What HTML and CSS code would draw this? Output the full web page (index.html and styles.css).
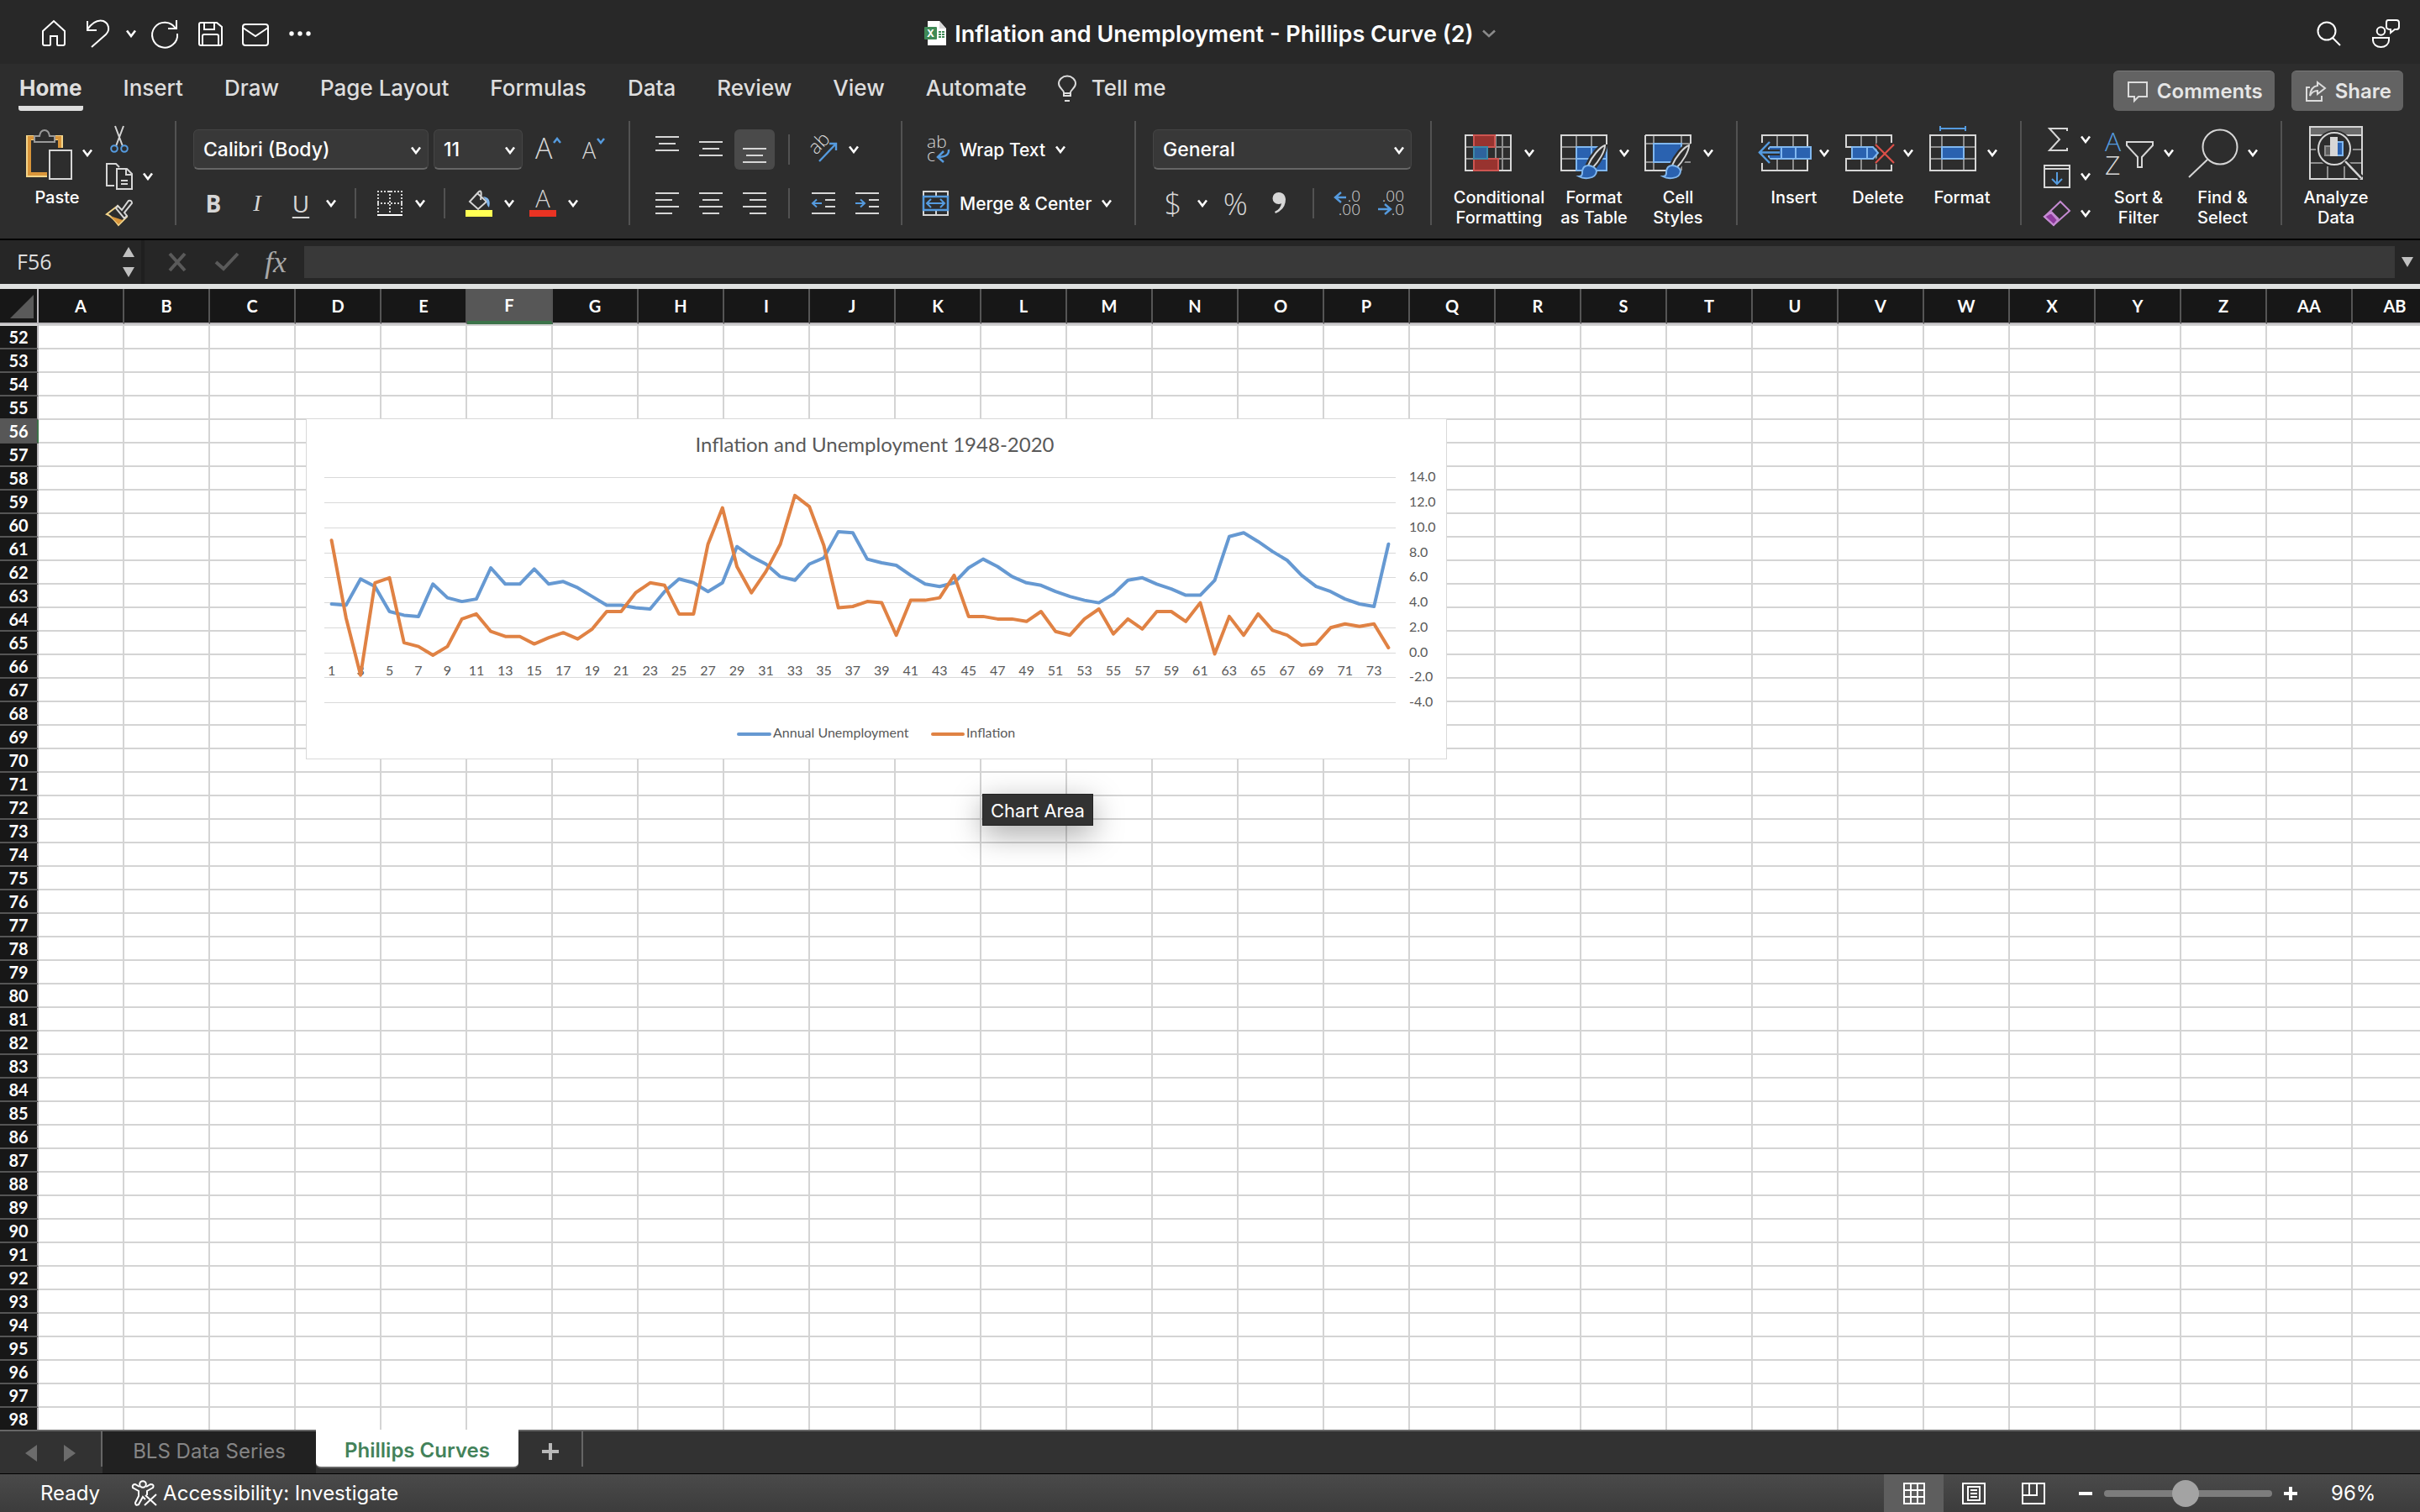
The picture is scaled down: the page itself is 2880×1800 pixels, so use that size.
FILE: index.html
```
<!DOCTYPE html>
<html lang="en">
<head>
    <meta charset="UTF-8">
    <meta name="viewport" content="width=device-width, initial-scale=1.0">
    <title>Inflation and Unemployment - Phillips Curve (2)</title>
    <link rel="stylesheet" href="styles.css">
</head>
<body>
    <!-- shared symbols -->
    <svg class="symbols" aria-hidden="true">
        <symbol id="chevron" viewBox="0 0 12 10"><path d="M1 1.5 6 8 11 1.5" fill="none" stroke="currentColor" stroke-width="2.6"/></symbol>
        <symbol id="brush" viewBox="0 0 34 42">
            <path d="M32 1C26 2 16 14 12 24L18 28C25 20 32 8 32 1Z" fill="#2d2d2d" stroke="#2d2d2d" stroke-width="6"/>
            <path d="M32 1C26 3 16 15 12 25L17 28C25 20 32 8 32 1Z" fill="#2d2d2d" stroke="#d6d6d6" stroke-width="2"/>
            <path d="M12 25C6 25 5 30 5 34C5 37 3 38 1 38C6 41 21 42 22 32C22 28 16 25 12 25Z" fill="#2a62b0" stroke="#80b7ef" stroke-width="2"/>
        </symbol>
    </svg>

    <header class="titlebar">
        <div class="quick-access">
            <button aria-label="Home"><svg width="32" height="34" viewBox="0 0 32 34"><path d="M3 14 16 2 29 14V29Q29 31 27 31H21Q20 31 20 30V20H12V30Q12 31 11 31H5Q3 31 3 29Z"/></svg></button>
            <button aria-label="Undo"><svg width="32" height="34" viewBox="0 0 32 34"><path d="M3 2V13H14M3 12C8 5 15 0 22 2C29 5 30 13 25 18L8 33"/></svg></button>
            <button aria-label="Undo history" class="narrow"><svg class="chevron"><use href="#chevron"/></svg></button>
            <button aria-label="Redo"><svg width="34" height="34" viewBox="0 0 34 34"><path d="M31 1V11H21M30 11A15 15 0 1 0 32 17"/></svg></button>
            <button aria-label="Save"><svg width="32" height="34" viewBox="0 0 32 34"><path d="M5 4H24L30 9V29Q30 31 28 31H5Q3 31 3 29V6Q3 4 5 4ZM9 4V12H21V4M7 31V20Q7 18 9 18H24Q26 18 26 20V31"/></svg></button>
            <button aria-label="Mail"><svg width="34" height="34" viewBox="0 0 34 34"><rect x="2" y="6" width="30" height="25" rx="3"/><path d="M2 10 17 20 32 10"/></svg></button>
            <button aria-label="More"><svg width="32" height="34" viewBox="0 0 32 34"><g fill="#fff" stroke="none"><circle cx="5" cy="17" r="2.7"/><circle cx="15" cy="17" r="2.7"/><circle cx="25" cy="17" r="2.7"/></g></svg></button>
        </div>
        <h1 class="doc-title">
            <svg width="26" height="30" viewBox="0 0 26 30"><path d="M4 0H18L26 9V29H4Z" fill="#fff"/><path d="M18 0V9H26" fill="#d8d8d8"/><path d="M17 12h3v2h-3zM21 12h3v2h-3zM17 15h3v2h-3zM21 15h3v2h-3zM17 18h3v2h-3zM21 18h3v2h-3z" fill="#3f8a56"/><rect y="7" width="15" height="15" rx="1" fill="#3f8a56"/><text x="7.5" y="19" text-anchor="middle" font-size="12" font-weight="700" fill="#fff">X</text></svg>
            Inflation and Unemployment - Phillips Curve (2)
            <svg class="title-chevron" width="16" height="10" viewBox="0 0 16 10"><path d="M1 1.5 8 8 15 1.5" fill="none" stroke="#8a8a8a" stroke-width="2.6"/></svg>
        </h1>
        <div class="title-actions">
            <button aria-label="Search"><svg width="32" height="34" viewBox="0 0 32 34"><circle cx="13" cy="14" r="10.500"/><path d="M20 22 29 31"/></svg></button>
            <button aria-label="Presence"><svg width="34" height="34" viewBox="0 0 34 34"><circle cx="11.500" cy="14" r="4.800"/><path d="M2 22H21V25A9.500 8 0 0 1 2 25ZM20 1H30Q33 1 33 4V9Q33 12 30 12H28L23 16V12Q18 12 18 9V4Q18 1 20 1"/></svg></button>
        </div>
    </header>

    <nav class="tabs">
        <a href="#home" class="current">Home</a>
        <a href="#insert">Insert</a>
        <a href="#draw">Draw</a>
        <a href="#layout">Page Layout</a>
        <a href="#formulas">Formulas</a>
        <a href="#data">Data</a>
        <a href="#review">Review</a>
        <a href="#view">View</a>
        <a href="#automate">Automate</a>
        <a href="#tell" class="tell-me"><svg width="22" height="32" viewBox="0 0 22 32" fill="none" stroke="#dcdcdc" stroke-width="2"><path d="M7 24V20C7 17 1 15 1 9.500A10 9 0 0 1 21 9.500C21 15 15 17 15 20V24ZM7 21H15M8 30H14"/></svg>Tell me</a>
        <div class="tab-buttons">
            <button><svg width="26" height="26" viewBox="0 0 26 26"><path d="M2 2H24V19H14L9 24V19H2Z"/></svg>Comments</button>
            <button><svg width="26" height="26" viewBox="0 0 26 26"><path d="M6 8H2V24H20V18M15 2 24 9 15 16V12Q9 12 6 18Q7 7 15 6Z"/></svg>Share</button>
        </div>
    </nav>

    <div class="ribbon">
        <section class="group clipboard">
            <button class="big">
                <span class="face">
                    <svg width="64" height="64" viewBox="0 0 64 64" fill="none"><path d="M16 14H8V58H30M40 14H46V26" stroke="#f3d58a" stroke-width="6"/><path d="M17 14H9V57H30M40 14H45V26" stroke="#d9953a" stroke-width="4"/><path d="M15 19V12H21Q22 5 27 5Q32 5 33 12H39V19Z" fill="#2d2d2d" stroke="#9a9a9a" stroke-width="2"/><path d="M33 29H59V63H33Z" fill="#2d2d2d" stroke="#d6d6d6" stroke-width="2"/></svg>
                    <svg class="chevron"><use href="#chevron"/></svg>
                </span>
                Paste
            </button>
            <div class="stack">
                <button aria-label="Cut"><svg width="32" height="32" viewBox="0 0 32 32" fill="none" stroke-width="2"><path d="M11 0 20 24M21 0 12 24" stroke="#d6d6d6"/><circle cx="10" cy="27" r="3.800" stroke="#559bdf"/><circle cx="22" cy="27" r="3.800" stroke="#559bdf"/></svg></button>
                <button aria-label="Copy"><svg width="32" height="32" viewBox="0 0 32 32" fill="none" stroke="#d6d6d6" stroke-width="2"><path d="M10 27H1V1H12L16 5M13 7H25L31 13V31H13ZM24 7V14H31"/><path d="M18 21H26M18 25H26"/></svg><svg class="chevron"><use href="#chevron"/></svg></button>
                <button aria-label="Format Painter"><svg width="32" height="32" viewBox="0 0 32 32" fill="none" stroke-width="2"><path d="M14 7 25 20 15 30Q8 20 1 17Z" stroke="#f3d58a"/><path d="M5 19 20 24 15 29Z" fill="#d9953a"/><path d="M14 7 19 12 27 1Q31 0 31 4L22 15 25 19 22 22 12 10Z" fill="#2d2d2d" stroke="#d6d6d6"/></svg></button>
            </div>
        </section>

        <section class="group font rows">
            <div class="row">
                <label class="picker font-name"><select aria-label="Font"><option>Calibri (Body)</option></select><svg class="chevron"><use href="#chevron"/></svg></label>
                <label class="picker font-size"><select aria-label="Font size"><option>11</option></select><svg class="chevron"><use href="#chevron"/></svg></label>
                <button class="tool" aria-label="Increase font size"><svg width="32" height="32" viewBox="0 0 32 32"><text x="1" y="27" font-size="34" class="thin">A</text><path d="M23 8 27 3 31 8" fill="none" stroke="#559bdf" stroke-width="2.500"/></svg></button>
                <button class="tool" aria-label="Decrease font size"><svg width="32" height="32" viewBox="0 0 32 32"><text x="3" y="27" font-size="27" class="thin">A</text><path d="M21 3 25 8 29 3" fill="none" stroke="#559bdf" stroke-width="2.500"/></svg></button>
            </div>
            <div class="row">
                <button class="tool glyph bold">B</button>
                <button class="tool spaced glyph italic">I</button>
                <button class="tool spaced glyph underline">U</button>
                <button class="drop" aria-label="Underline options"><svg class="chevron"><use href="#chevron"/></svg></button>
                <i class="divider"></i>
                <button class="tool" aria-label="Borders"><svg width="32" height="32" viewBox="0 0 32 32" fill="none" stroke="#d6d6d6" stroke-width="2"><path d="M1 2H31M1 16H31M2 1V28M16 1V28M30 1V28" stroke-dasharray="2 2"/><path d="M1 30H31" stroke="#fff"/></svg></button>
                <button class="drop" aria-label="Border options"><svg class="chevron"><use href="#chevron"/></svg></button>
                <i class="divider"></i>
                <button class="tool" aria-label="Fill colour"><svg width="32" height="32" viewBox="0 0 32 32" fill="none"><path d="M14 4 25 14 15 23 5 14 16 2Q20 -1 18 12" stroke="#d6d6d6" stroke-width="2"/><path d="M21 8Q31 9 28 21Q25 18 25 13Z" fill="#80b7ef"/><path d="M0 24H32V32H0Z" fill="#ffff54"/></svg></button>
                <button class="drop" aria-label="Fill options"><svg class="chevron"><use href="#chevron"/></svg></button>
                <button class="tool spaced" aria-label="Font colour"><svg width="32" height="32" viewBox="0 0 32 32"><text x="16" y="21" text-anchor="middle" font-size="29" class="thin">A</text><path d="M0 24H32V32H0Z" fill="#e93323"/></svg></button>
                <button class="drop" aria-label="Font colour options"><svg class="chevron"><use href="#chevron"/></svg></button>
            </div>
        </section>

        <section class="group alignment rows">
            <div class="row">
                <button class="tool" aria-label="Top"><svg class="lines" width="28" height="32" viewBox="0 0 28 32"><path d="M0 1H28M4 9H24M0 17H28"/></svg></button>
                <button class="tool spaced" aria-label="Middle"><svg class="lines" width="28" height="32" viewBox="0 0 28 32"><path d="M0 7H28M4 15H24M0 23H28"/></svg></button>
                <button class="tool spaced pressed" aria-label="Bottom"><svg class="lines" width="28" height="32" viewBox="0 0 28 32"><path d="M0 15H28M4 23H24M0 31H28"/></svg></button>
                <i class="divider"></i>
                <button class="tool" aria-label="Orientation"><svg width="34" height="32" viewBox="0 0 34 32"><text transform="translate(8 23) rotate(-45)" font-size="23" class="thin">ab</text><path d="M12 30 32 9M24 9H32V17" fill="none" stroke="#559bdf" stroke-width="2.400"/></svg></button>
                <button class="drop" aria-label="Orientation options"><svg class="chevron"><use href="#chevron"/></svg></button>
            </div>
            <div class="row">
                <button class="tool" aria-label="Left"><svg class="lines" width="28" height="28" viewBox="0 0 28 28"><path d="M0 2H28M0 10H20M0 18H28M0 26H20"/></svg></button>
                <button class="tool spaced" aria-label="Center"><svg class="lines" width="28" height="28" viewBox="0 0 28 28"><path d="M0 2H28M4 10H24M0 18H28M4 26H24"/></svg></button>
                <button class="tool spaced" aria-label="Right"><svg class="lines" width="28" height="28" viewBox="0 0 28 28"><path d="M0 2H28M8 10H28M0 18H28M8 26H28"/></svg></button>
                <i class="divider"></i>
                <button class="tool" aria-label="Decrease indent"><svg class="lines" width="28" height="28" viewBox="0 0 28 28"><path d="M0 2H28M16 10H28M16 18H28M0 26H28"/><path d="M12 14H1M6 9.500 1 14 6 18.500" stroke="#559bdf"/></svg></button>
                <button class="tool spaced" aria-label="Increase indent"><svg class="lines" width="28" height="28" viewBox="0 0 28 28"><path d="M0 2H28M16 10H28M16 18H28M0 26H28"/><path d="M0 14H11M6 9.500 11 14 6 18.500" stroke="#559bdf"/></svg></button>
            </div>
        </section>

        <section class="group wrap rows">
            <button class="wide"><svg width="32" height="34" viewBox="0 0 32 34"><text x="5" y="15" font-size="21" class="thin">ab</text><text x="5" y="31" font-size="21" class="thin">c</text><path d="M31 17Q32 26 18 26M25 19 18 26 25 32" fill="none" stroke="#559bdf" stroke-width="2.500"/></svg>Wrap Text<svg class="chevron"><use href="#chevron"/></svg></button>
            <button class="wide"><svg width="32" height="34" viewBox="0 0 32 34" fill="none" stroke-width="2"><path d="M1 3H30V31H1ZM16 3V31" stroke="#d6d6d6"/><path d="M1 9H30V25H1Z" fill="#2d2d2d" stroke="#559bdf" stroke-width="2.500"/><path d="M6 17H25M10 12 5 17 10 22M21 12 26 17 21 22" stroke="#559bdf"/></svg>Merge &amp; Center<svg class="chevron"><use href="#chevron"/></svg></button>
        </section>

        <section class="group number rows">
            <label class="picker"><select aria-label="Number format"><option>General</option></select><svg class="chevron"><use href="#chevron"/></svg></label>
            <div class="row">
                <button class="tool glyph symbol">$</button>
                <button class="drop" aria-label="Currency options"><svg class="chevron"><use href="#chevron"/></svg></button>
                <button class="tool spaced glyph symbol">%</button>
                <button class="tool spaced" aria-label="Comma style"><svg width="16" height="28" viewBox="0 0 16 28"><path d="M7.500 1A7 7 0 0 0 7.500 15Q10 15 11 14Q10 21 3 24L4 26Q16 21 16 9Q15 1 7.500 1Z" fill="#d6d6d6"/></svg></button>
                <i class="divider"></i>
                <button class="tool" aria-label="Increase decimal"><svg width="32" height="32" viewBox="0 0 32 32"><text x="31" y="14" text-anchor="end" font-size="19" class="thin">.0</text><text x="31" y="30" text-anchor="end" font-size="19" class="thin">.00</text><path d="M14 9H1M8 3 1 9 8 15" fill="none" stroke="#559bdf" stroke-width="2.400"/></svg></button>
                <button class="tool spaced" aria-label="Decrease decimal"><svg width="32" height="32" viewBox="0 0 32 32"><text x="31" y="14" text-anchor="end" font-size="19" class="thin">.00</text><text x="31" y="30" text-anchor="end" font-size="19" class="thin">.0</text><path d="M0 23H14M8 17 15 23 8 29" fill="none" stroke="#559bdf" stroke-width="2.400"/></svg></button>
            </div>
        </section>

        <section class="group styles">
            <button class="big first">
                <span class="face"><svg width="64" height="64" viewBox="0 0 64 64" fill="none" stroke-width="2"><path d="M2 25H56M2 39H56M12 11V53M38 11V53M46 11V53" stroke="#8e8e8e"/><path d="M2 11H56V53H2Z" stroke="#d6d6d6"/><path d="M12 11H37V25H12ZM12 39H41V53H12Z" fill="#98332f" stroke="#cd5551"/><path d="M12 25H28V39H12Z" fill="#2e639d" stroke="#3e88a8"/></svg><svg class="chevron"><use href="#chevron"/></svg></span>
                Conditional<br>Formatting
            </button>
            <button class="big">
                <span class="face"><svg width="64" height="64" viewBox="0 0 64 64" fill="none" stroke-width="2"><path d="M3 25H57M3 39H57M21 11V53M39 11V53" stroke="#8e8e8e"/><path d="M3 11H57V53H3Z" stroke="#d6d6d6"/><path d="M21 25H57V53H21ZM21 39H57M39 25V53" fill="#2a62b0" stroke="#80b7ef"/><use href="#brush" x="17" y="22" width="46" height="42"/></svg><svg class="chevron"><use href="#chevron"/></svg></span>
                Format<br>as Table
            </button>
            <button class="big">
                <span class="face"><svg width="64" height="64" viewBox="0 0 64 64" fill="none" stroke-width="2"><path d="M3 21H57M3 43H57M13 11V53M46 11V53" stroke="#8e8e8e"/><path d="M3 11H57V21M30 53H3V11" stroke="#d6d6d6"/><path d="M13 21H46V43H13Z" fill="#2a62b0" stroke="#80b7ef"/><use href="#brush" x="17" y="22" width="46" height="42"/></svg><svg class="chevron"><use href="#chevron"/></svg></span>
                Cell<br>Styles
            </button>
        </section>

        <section class="group cells">
            <button class="big">
                <span class="face"><svg width="64" height="64" viewBox="0 0 64 64" fill="none" stroke-width="2"><path d="M22 11V53M41 11V53" stroke="#8e8e8e"/><path d="M4 20V11H58V53H4V44" stroke="#d6d6d6"/><path d="M12 25H62V39H12ZM27 25V39M44 25V39" fill="#2a62b0" stroke="#80b7ef"/><path d="M0 31.500H25M13 19 1 31.500 13 44" stroke="#2d2d2d" stroke-width="7"/><path d="M0 31.500H25M13 19 1 31.500 13 44" stroke="#559bdf" stroke-width="2.500"/></svg><svg class="chevron"><use href="#chevron"/></svg></span>
                Insert
            </button>
            <button class="big">
                <span class="face"><svg width="64" height="64" viewBox="0 0 64 64" fill="none" stroke-width="2"><path d="M22 11V53M40 11V53" stroke="#8e8e8e"/><path d="M12 25H4V11H58V20M58 46V53H4V39H12" stroke="#d6d6d6"/><path d="M11 25H36L42 32 36 39H11ZM29 25V39" fill="#2a62b0" stroke="#80b7ef"/><path d="M39 22 61 44M61 22 39 44" stroke="#2d2d2d" stroke-width="6"/><path d="M39 22 61 44M61 22 39 44" stroke="#dd4f48" stroke-width="2.200"/></svg><svg class="chevron"><use href="#chevron"/></svg></span>
                Delete
            </button>
            <button class="big">
                <span class="face"><svg width="64" height="64" viewBox="0 0 64 64" fill="none" stroke-width="2"><path d="M4 25H58M4 39H58M18 11V53M44 11V53" stroke="#8e8e8e"/><path d="M4 11H58V53H4Z" stroke="#d6d6d6"/><path d="M18 25H44V39H18Z" fill="#2a62b0" stroke="#80b7ef"/><path d="M16 3H46M16 0V6M46 0V6" stroke="#559bdf"/></svg><svg class="chevron"><use href="#chevron"/></svg></span>
                Format
            </button>
        </section>

        <section class="group editing">
            <div class="stack">
                <button aria-label="AutoSum"><svg width="32" height="32" viewBox="0 0 32 32" fill="none" stroke="#d6d6d6" stroke-width="2"><path d="M28 6V3H7L19 16 7 29H28V26"/></svg><svg class="chevron"><use href="#chevron"/></svg></button>
                <button aria-label="Fill"><svg width="32" height="32" viewBox="0 0 32 32" fill="none" stroke="#d6d6d6" stroke-width="2"><path d="M1 3H31V29H1ZM1 7H31"/><path d="M16 11V25M10 19 16 25 22 19" stroke="#559bdf"/></svg><svg class="chevron"><use href="#chevron"/></svg></button>
                <button aria-label="Clear"><svg width="32" height="32" viewBox="0 0 32 32" fill="none" stroke="#c58ad2" stroke-width="2"><path d="M9 15 17 24 12 30 1 20Z" fill="#8e3a9d"/><path d="M20 2 31 13 12 30 1 20ZM9 14 18 23"/></svg><svg class="chevron"><use href="#chevron"/></svg></button>
            </div>
            <button class="big">
                <span class="face"><svg width="64" height="64" viewBox="0 0 64 64" fill="none"><text x="2" y="30" font-size="32" class="thin blue">A</text><text x="2" y="58" font-size="32" class="thin">Z</text><path d="M28 19H59V23L46 37V49H41V37L28 23Z" stroke="#d6d6d6" stroke-width="2"/></svg><svg class="chevron"><use href="#chevron"/></svg></span>
                Sort &amp;<br>Filter
            </button>
            <button class="big">
                <span class="face"><svg width="64" height="64" viewBox="0 0 64 64" fill="none" stroke="#d6d6d6" stroke-width="2"><circle cx="39" cy="25" r="20.500"/><path d="M24 40 2 61"/></svg><svg class="chevron"><use href="#chevron"/></svg></span>
                Find &amp;<br>Select
            </button>
        </section>

        <section class="group analysis">
            <button class="big">
                <span class="face"><svg width="64" height="64" viewBox="0 0 64 64" fill="none" stroke-width="2"><path d="M1 1H63V11H1Z" fill="#6b6b6b"/><path d="M1 28H63M1 44H63M22 48V63M42 48V63" stroke="#8e8e8e"/><path d="M1 63V1H63V63ZM1 11H63" stroke="#d6d6d6"/><circle cx="30" cy="27" r="22" fill="#2d2d2d"/><circle cx="30" cy="27" r="19" stroke="#d6d6d6"/><path d="M42 42 62 62" stroke="#2d2d2d" stroke-width="7"/><path d="M43 42 62 62" stroke="#d6d6d6" stroke-width="2.500"/><path d="M19 24H26V35H19Z" fill="#5c5c5c" stroke="#8e8e8e"/><path d="M33 19H40V35H33Z" fill="#2a62b0" stroke="#80b7ef"/><path d="M25 13H34V36H25Z" fill="#d6d6d6"/></svg></span>
                Analyze<br>Data
            </button>
        </section>
    </div>

    <div class="formula-bar">
        <div class="name-box">
            <input type="text" value="F56" aria-label="Name box">
            <svg width="14" height="36" viewBox="0 0 14 36"><path d="M0 12 7 0 14 12ZM0 24H14L7 36Z" fill="#c0c0c0"/></svg>
        </div>
        <div class="formula-buttons">
            <button aria-label="Cancel"><svg width="28" height="22" viewBox="0 0 28 22"><path d="M5 1 23 21M23 1 5 21" stroke="#5a5a5a" stroke-width="4"/></svg></button>
            <button aria-label="Enter"><svg width="28" height="22" viewBox="0 0 28 22"><path d="M1 11 10 19 27 1" fill="none" stroke="#5a5a5a" stroke-width="4"/></svg></button>
            <button class="fx">fx</button>
        </div>
        <input type="text" class="formula" aria-label="Formula">
        <button class="expand" aria-label="Expand"><svg width="14" height="12" viewBox="0 0 14 12"><path d="M0 0H14L7 12Z" fill="#c0c0c0"/></svg></button>
    </div>

    <main class="sheet">
        <table class="grid">
            <thead><tr id="columns"><th class="corner"><svg width="28" height="28" viewBox="0 0 28 28"><path d="M28 0V28H0Z" fill="#5a5a5a"/></svg></th></tr></thead>
            <tbody id="rows"></tbody>
        </table>
        <figure class="chart">
            <svg id="chart" width="1356" height="404" viewBox="1 1 1356 404" role="img" aria-label="Inflation and Unemployment 1948-2020"></svg>
        </figure>
        <div class="tooltip">Chart Area</div>
    </main>

    <div class="sheet-tabs">
        <div class="sheet-nav">
            <button aria-label="Previous sheet"><svg width="14" height="20" viewBox="0 0 14 20"><path d="M14 0V20L0 10Z" fill="#6c6c6c"/></svg></button>
            <button aria-label="Next sheet"><svg width="14" height="20" viewBox="0 0 14 20"><path d="M0 0V20L14 10Z" fill="#6c6c6c"/></svg></button>
        </div>
        <button class="sheet-tab">BLS Data Series</button>
        <button class="sheet-tab active">Phillips Curves</button>
        <button class="add-sheet" aria-label="Add sheet"><svg width="20" height="20" viewBox="0 0 20 20"><path d="M10 0V20M0 10H20" stroke="#b9b9b9" stroke-width="4"/></svg></button>
    </div>

    <footer class="status">
        <span>Ready</span>
        <button class="access"><svg width="30" height="32" viewBox="0 0 30 32" fill="none" stroke="#fff" stroke-width="2"><circle cx="13" cy="5" r="3.800"/><path d="M9 8 4 5Q0 5 1 9L8 13V19L4 27Q4 31 8 29L13 20 16 23M17 8 22 5Q27 5 25 9L18 13V18M16 18 29 30M29 17 15 30"/></svg>Accessibility: Investigate</button>
        <div class="views">
            <button class="on" aria-label="Normal view"><svg width="28" height="28" viewBox="0 0 28 28"><path d="M2 2H26V26H2ZM10 2V26M18 2V26M2 10H26M2 18H26"/></svg></button>
            <button aria-label="Page layout view"><svg width="28" height="28" viewBox="0 0 28 28"><path d="M1 2H27V26H1ZM7 6H21V22H7ZM10 10H18M10 14H18M10 18H18"/></svg></button>
            <button aria-label="Page break view"><svg width="28" height="28" viewBox="0 0 28 28"><path d="M1 2H27V26H1ZM1 16H18V2M9 2V16"/></svg></button>
        </div>
        <div class="zoom">
            <button aria-label="Zoom out"><svg width="16" height="16" viewBox="0 0 16 16"><path d="M0 8H16" stroke="#fff" stroke-width="4"/></svg></button>
            <input type="range" min="0" max="100" value="48" aria-label="Zoom">
            <button aria-label="Zoom in"><svg width="16" height="16" viewBox="0 0 16 16"><path d="M8 0V16M0 8H16" stroke="#fff" stroke-width="4"/></svg></button>
            <span class="percent">96%</span>
        </div>
    </footer>
    <script src="script.js"></script>
</body>
</html>
```
FILE: styles.css
```
* {
    box-sizing: border-box;
}
body {
    margin: 0;
    height: 100vh;
    display: flex;
    flex-direction: column;
    overflow: hidden;
    background: #282828;
    color: #fff;
    font-family: Inter, "Liberation Sans", sans-serif;
    font-size: 20px;
}
button {
    display: flex;
    align-items: center;
    justify-content: center;
    padding: 0;
    border: none;
    background: none;
    color: inherit;
    font: inherit;
}
svg {
    display: block;
    flex: none;
    overflow: visible;
}
.symbols {
    position: absolute;
    width: 0;
    height: 0;
}
.chevron {
    width: 12px;
    height: 10px;
}

/* title bar */
.titlebar {
    height: 76px;
    flex: none;
    display: grid;
    grid-template-columns: 1fr auto 1fr;
    align-items: center;
    padding: 4px 24px 0;
}
.quick-access, .title-actions {
    display: flex;
    align-items: center;
    gap: 21px;
}
.quick-access {
    padding-left: 24px;
}
.quick-access svg, .title-actions svg {
    fill: none;
    stroke: #fff;
    stroke-width: 2;
}
.quick-access .narrow {
    margin: 0 -4px;
}
.title-actions {
    justify-content: flex-end;
    gap: 34px;
}
.doc-title {
    display: flex;
    align-items: center;
    gap: 10px;
    margin: 0;
    font-size: 27px;
    font-weight: 600;
}

/* ribbon tabs */
.tabs {
    height: 58px;
    flex: none;
    display: flex;
    align-items: flex-start;
    gap: 47px;
    padding: 8px 20px 0 22px;
    background: #2d2d2d;
    font-size: 26px;
    font-weight: 500;
}
.tabs a {
    height: 48px;
    padding: 0 1px;
    line-height: 42px;
    color: #dedede;
    text-decoration: none;
}
.tabs .current {
    font-weight: 700;
    border-bottom: 6px solid #dedede;
    border-radius: 3px;
}
.tabs .tell-me {
    display: flex;
    gap: 18px;
    margin-left: -12px;
}
.tell-me svg {
    margin-top: 6px;
}
.tab-buttons {
    display: flex;
    gap: 20px;
    margin-left: auto;
}
.tab-buttons button {
    height: 48px;
    gap: 10px;
    padding: 0 14px 0 16px;
    border-radius: 6px;
    background: #636363;
    border-top: 1px solid #787878;
    color: #e6e6e6;
    font-size: 24px;
    font-weight: 600;
}
.tab-buttons svg {
    fill: none;
    stroke: #dcdcdc;
    stroke-width: 2;
}

/* ribbon */
.ribbon {
    height: 152px;
    flex: none;
    display: flex;
    padding-top: 10px;
    background: #2d2d2d;
    border-bottom: 2px solid #000;
}
.group {
    height: 124px;
    flex: none;
    display: flex;
    border-right: 2px solid #525252;
}
.rows {
    flex-direction: column;
    gap: 16px;
    padding-top: 10px;
}
.row {
    display: flex;
    align-items: center;
}
.clipboard { width: 210px; padding-left: 18px; }
.font { width: 540px; padding-left: 20px; }
.alignment { width: 324px; padding-left: 20px; }
.wrap { width: 278px; padding-left: 24px; }
.number { width: 352px; padding: 10px 22px 0 20px; }
.styles { width: 364px; padding-left: 17px; }
.cells { width: 338px; padding-left: 17px; }
.editing { width: 310px; padding-left: 26px; }
.analysis { border: none; padding-left: 14px; }

.big {
    width: 100px;
    flex: none;
    flex-direction: column;
    justify-content: flex-start;
    padding-top: 6px;
    line-height: 24px;
    font-weight: 500;
}
.big.first {
    width: 126px;
}
.face {
    display: flex;
    align-items: center;
    gap: 8px;
    margin-bottom: 9px;
}
.stack {
    display: flex;
    flex-direction: column;
    gap: 12px;
    padding-top: 6px;
}
.stack button {
    height: 32px;
    justify-content: flex-start;
    gap: 12px;
}
.clipboard .stack {
    margin-left: 8px;
}
.editing .stack {
    margin-right: 7px;
}
.tool {
    width: 48px;
    height: 48px;
    flex: none;
}
.spaced {
    margin-left: 4px;
}
.drop {
    width: 24px;
    height: 48px;
}
.pressed {
    border-radius: 6px;
    background: #4a4a4a;
}
.divider {
    width: 2px;
    height: 36px;
    margin: 0 16px;
    background: #525252;
}
.lines {
    fill: none;
    stroke: #d6d6d6;
    stroke-width: 2;
}
.thin {
    fill: #d6d6d6;
    font-family: "Open Sans", sans-serif;
    font-weight: 300;
}
.blue {
    fill: #559bdf;
}
.glyph {
    color: #d6d6d6;
    font-family: "Open Sans", sans-serif;
    font-size: 28px;
}
.bold { font-weight: 700; }
.italic { font-family: "Liberation Serif", serif; font-style: italic; }
.underline { text-decoration: underline; text-decoration-thickness: 2px; text-underline-offset: 5px; }
.symbol { font-size: 36px; font-weight: 300; }
.picker {
    position: relative;
    display: block;
    height: 48px;
}
.picker select {
    width: 100%;
    height: 48px;
    padding: 0 11px;
    appearance: none;
    border: 1px solid #454545;
    border-bottom: 2px solid #666;
    border-radius: 6px;
    background: #383838;
    color: #fff;
    font-family: inherit;
    font-size: 23px;
    font-weight: 500;
}
.picker .chevron {
    position: absolute;
    right: 9px;
    top: 20px;
}
.font-name { width: 280px; }
.font-size { width: 106px; margin: 0 6px; }
.font .font-size + .tool { margin-right: 6px; }
.wide {
    height: 48px;
    gap: 12px;
    justify-content: flex-start;
    font-size: 21px;
    font-weight: 500;
}

/* formula bar */
.formula-bar {
    height: 52px;
    flex: none;
    display: flex;
    align-items: center;
    background: #262626;
}
.name-box {
    width: 172px;
    height: 52px;
    display: flex;
    align-items: center;
    padding: 0 8px 0 18px;
    border-right: 4px solid #1f1f1f;
}
.name-box input {
    flex: 1;
    min-width: 0;
    padding: 0 0 2px 2px;
    border: none;
    background: none;
    color: #dedede;
    font-family: "Open Sans", sans-serif;
    font-size: 25px;
}
.formula-buttons {
    display: flex;
    align-items: center;
    gap: 31px;
    width: 190px;
    padding-left: 25px;
}
.fx {
    color: #a8a8a8;
    font-family: "Liberation Serif", serif;
    font-style: italic;
    font-size: 36px;
    line-height: 40px;
}
.formula {
    flex: 1;
    height: 38px;
    border: none;
    background: #393939;
    color: #fff;
    font-size: 24px;
}
.expand {
    width: 30px;
}

/* sheet */
.sheet {
    position: relative;
    flex: 1;
    min-height: 0;
    overflow: hidden;
    border-top: 6px solid #dfe1e0;
    background: #fff;
}
.grid {
    width: max-content;
    border-spacing: 0;
    font-family: Lato, sans-serif;
    font-size: 20px;
    font-weight: 700;
    line-height: 26px;
}
.grid th, .grid td {
    width: 102px;
    height: 28px;
    padding: 0;
    border-right: 2px solid #d4d4d4;
    border-bottom: 2px solid #d4d4d4;
}
.grid thead th {
    height: 42px;
    background: #171717;
    border-right-color: #555;
    border-bottom-color: #bcb9bd;
}
.grid tbody th, .grid thead .corner {
    width: 46px;
    background: #171717;
    border-right-color: #bcb9bd;
}
.grid tbody th {
    border-bottom-color: #555;
}
.grid tbody tr:first-child > * {
    height: 30px;
    border-top: 2px solid #d4d4d4;
}
.grid .corner svg {
    margin: 2px 0 0 12px;
}
.grid thead .selected {
    background: #575757;
    border-bottom: 4px solid #3c734a;
}
.grid tbody .selected {
    background: #575757;
    border-right-color: #3c734a;
}
.active-cell {
    position: relative;
}
.active-cell::before {
    content: "";
    position: absolute;
    left: -4px;
    right: -4px;
    top: -2px;
    height: 2px;
    background: #3c734a;
}
.chart {
    position: absolute;
    left: 364px;
    top: 154px;
    margin: 0;
    border: 1px solid #d9d9d9;
    background: #fff;
    font-family: Lato, sans-serif;
}
.chart text {
    fill: #595959;
    font-size: 16px;
}
.chart .chart-title {
    font-size: 24px;
}
.gridline {
    stroke: #d9d9d9;
}
.series {
    fill: none;
    stroke-width: 4;
    stroke-linejoin: round;
    stroke-linecap: round;
}
.unemployment { stroke: #6699d2; }
.inflation { stroke: #e08244; }
.tooltip {
    position: absolute;
    left: 1169px;
    top: 601px;
    padding: 2px 9px 0;
    border: 1px solid #222;
    background: #323232;
    font-size: 22px;
    line-height: 34px;
    box-shadow: 0 10px 36px rgba(0,0,0,0.35);
}

/* sheet tabs */
.sheet-tabs {
    height: 52px;
    flex: none;
    display: flex;
    align-items: flex-start;
    background: #323232;
    font-size: 24px;
}
.sheet-nav {
    width: 122px;
    height: 44px;
    display: flex;
    align-items: center;
    gap: 32px;
    padding: 10px 0 0 30px;
    border-top: 2px solid #666;
    border-right: 2px solid #666;
}
.sheet-tab {
    width: 254px;
    height: 52px;
    padding-bottom: 4px;
    background: #212121;
    border-top: 2px solid #666;
    color: #858585;
}
.sheet-tab.active {
    width: 241px;
    height: 46px;
    padding-top: 8px;
    background: #fff;
    border-top: none;
    border-bottom: 2px solid #666;
    border-radius: 0 0 6px 6px;
    color: #43825a;
    font-weight: 600;
}
.add-sheet {
    width: 77px;
    height: 44px;
    padding-top: 6px;
    border-top: 2px solid #666;
    border-right: 2px solid #666;
}
.sheet-tabs::after {
    content: "";
    flex: 1;
    border-top: 2px solid #666;
}

/* status bar */
.status {
    height: 46px;
    flex: none;
    display: flex;
    align-items: center;
    padding-left: 48px;
    border-top: 1px solid #000;
    background: linear-gradient(#4a4a4a, #3c3c3c);
    font-size: 24px;
}
.access {
    gap: 7px;
    margin-left: 38px;
}
.views {
    display: flex;
    margin-left: auto;
}
.views button {
    width: 71px;
    height: 45px;
}
.views .on {
    background: #5e5e5e;
}
.views svg {
    fill: none;
    stroke: #fff;
    stroke-width: 2;
}
.zoom {
    display: flex;
    align-items: center;
    gap: 14px;
    margin-left: 19px;
}
.zoom input {
    width: 200px;
    height: 32px;
    margin: 0;
    appearance: none;
    background: none;
}
.zoom input::-webkit-slider-runnable-track {
    height: 8px;
    border-radius: 4px;
    background: #7d7d7d;
}
.zoom input::-webkit-slider-thumb {
    appearance: none;
    width: 32px;
    height: 32px;
    margin-top: -12px;
    border-radius: 50%;
    background: #a3a3a3;
}
.percent {
    width: 132px;
    padding-left: 26px;
}
```
FILE: script.js
```
const COLUMNS = 28;
const FIRST_ROW = 52;
const LAST_ROW = 98;
const ACTIVE_COLUMN = 5;
const ACTIVE_ROW = 56;

function columnName(i) {
    return i < 26 ? String.fromCharCode(65 + i) : 'A' + String.fromCharCode(39 + i);
}

const head = document.getElementById('columns');
for (let c = 0; c < COLUMNS; c++) {
    const th = document.createElement('th');
    th.textContent = columnName(c);
    if (c === ACTIVE_COLUMN) th.className = 'selected';
    head.appendChild(th);
}

const body = document.getElementById('rows');
for (let r = FIRST_ROW; r <= LAST_ROW; r++) {
    const tr = document.createElement('tr');
    const th = document.createElement('th');
    th.textContent = r;
    if (r === ACTIVE_ROW) th.className = 'selected';
    tr.appendChild(th);
    for (let c = 0; c < COLUMNS; c++) {
        const td = document.createElement('td');
        if (r === ACTIVE_ROW && c === ACTIVE_COLUMN) td.className = 'active-cell';
        tr.appendChild(td);
    }
    body.appendChild(tr);
}

// Chart
const unemployment = [
    3.9, 3.8, 5.9, 5.3, 3.3, 3.0, 2.9, 5.5, 4.4, 4.1, 4.3, 6.8, 5.5, 5.5, 6.7, 5.5, 5.7, 5.2, 4.5, 3.8,
    3.8, 3.6, 3.5, 4.9, 5.9, 5.6, 4.9, 5.6, 8.5, 7.7, 7.1, 6.1, 5.8, 7.1, 7.6, 9.7, 9.6, 7.5, 7.2, 7.0,
    6.2, 5.5, 5.3, 5.6, 6.8, 7.5, 6.9, 6.1, 5.6, 5.4, 4.9, 4.5, 4.2, 4.0, 4.7, 5.8, 6.0, 5.5, 5.1, 4.6,
    4.6, 5.8, 9.3, 9.6, 8.9, 8.1, 7.4, 6.2, 5.3, 4.9, 4.3, 3.9, 3.7, 8.7
];
const inflation = [
    9.0, 2.8, -1.8, 5.6, 6.0, 0.8, 0.5, -0.2, 0.5, 2.7, 3.1, 1.7, 1.3, 1.3, 0.7, 1.2, 1.6, 1.1, 1.9, 3.3,
    3.3, 4.8, 5.6, 5.4, 3.1, 3.1, 8.7, 11.6, 6.9, 4.8, 6.5, 8.7, 12.6, 11.7, 8.6, 3.6, 3.7, 4.1, 4.0, 1.4,
    4.2, 4.2, 4.4, 6.2, 2.9, 2.9, 2.7, 2.7, 2.5, 3.3, 1.7, 1.4, 2.7, 3.5, 1.5, 2.7, 1.9, 3.3, 3.3, 2.5,
    4.0, -0.1, 2.9, 1.4, 3.1, 1.8, 1.4, 0.6, 0.7, 2.0, 2.3, 2.1, 2.3, 0.4
];

const LEFT = 22, RIGHT = 1297, ZERO = 279, UNIT = 14.86;
const step = (RIGHT - LEFT) / unemployment.length;
const px = i => LEFT + step * (i + 0.5);
const py = v => ZERO - UNIT * v;
const points = data => data.map((v, i) => px(i).toFixed(1) + ',' + py(v).toFixed(1)).join(' ');

let out = '<text class="chart-title" x="677" y="40" text-anchor="middle">Inflation and Unemployment 1948-2020</text>';
for (let v = 14; v >= -4; v -= 2) {
    const y = Math.floor(py(v)) + 0.5;
    out += `<line class="gridline" x1="${LEFT}" x2="${RIGHT}" y1="${y}" y2="${y}"/>`;
    out += `<text x="1313" y="${y + 4}">${v.toFixed(1)}</text>`;
}
for (let i = 0; i < unemployment.length; i += 2) {
    out += `<text x="${px(i)}" y="306" text-anchor="middle">${i + 1}</text>`;
}
out += `<polyline class="series unemployment" points="${points(unemployment)}"/>`;
out += `<polyline class="series inflation" points="${points(inflation)}"/>`;
out += '<line class="series unemployment" x1="515" x2="552" y1="376" y2="376"/><text x="556" y="380">Annual Unemployment</text>';
out += '<line class="series inflation" x1="746" x2="782" y1="376" y2="376"/><text x="786" y="380">Inflation</text>';
document.getElementById('chart').innerHTML = out;
```
